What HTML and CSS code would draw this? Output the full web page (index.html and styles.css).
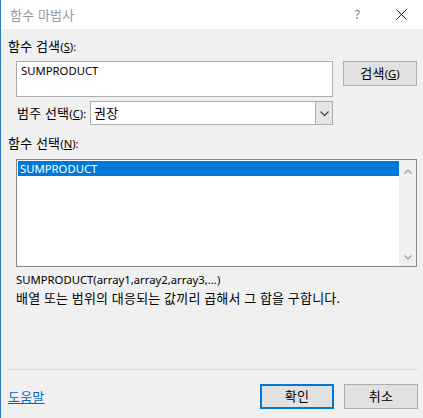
FILE: index.html
```html
<!DOCTYPE html>
<html lang="ko">
<head>
    <meta charset="UTF-8">
    <title>함수 마법사</title>
    <link rel="stylesheet" href="styles.css">
</head>
<body>
<div class="dialog">
    <div class="titlebar">
        <span class="title ko">함수 마법사</span>
        <span class="help">?</span>
        <svg class="close" width="11" height="11" viewBox="0 0 11 11">
            <path d="M0.5 0.5 L10.5 10.5 M10.5 0.5 L0.5 10.5" stroke="#222" stroke-width="1" fill="none"/>
        </svg>
    </div>

    <div class="content">
        <div class="label"><span class="ko">함수 검색</span>(<u>S</u>):</div>
        <div class="search-row">
            <div class="search-box">SUMPRODUCT</div>
            <button class="btn"><span class="ko">검색</span>(<u>G</u>)</button>
        </div>

        <div class="cat-row">
            <span class="cat-label"><span class="ko">범주 선택</span>(<u>C</u>):</span>
            <div class="select">
                <span class="select-value ko">권장</span>
                <span class="drop">
                    <svg width="9" height="5" viewBox="0 0 9 5">
                        <path d="M0.5 0.5 L4.5 4.5 L8.5 0.5" stroke="#444" stroke-width="1.2" fill="none"/>
                    </svg>
                </span>
            </div>
        </div>

        <div class="label label-list"><span class="ko">함수 선택</span>(<u>N</u>):</div>
        <div class="listbox">
            <div class="items">
                <div class="item selected">SUMPRODUCT</div>
            </div>
            <div class="scrollbar">
                <svg width="8" height="5" viewBox="0 0 8 5">
                    <path d="M0.5 4.5 L4 1 L7.5 4.5" stroke="#a6a6a6" stroke-width="1.5" fill="none"/>
                </svg>
                <svg width="8" height="5" viewBox="0 0 8 5">
                    <path d="M0.5 0.5 L4 4 L7.5 0.5" stroke="#a6a6a6" stroke-width="1.5" fill="none"/>
                </svg>
            </div>
        </div>

        <div class="desc">
            <div>SUMPRODUCT(array1,array2,array3,...)</div>
            <div class="ko">배열 또는 범위의 대응되는 값끼리 곱해서 그 합을 구합니다.</div>
        </div>

        <div class="separator"></div>

        <div class="footer">
            <a class="help-link ko" href="#">도움말</a>
            <button class="btn btn-default"><span class="ko">확인</span></button>
            <button class="btn"><span class="ko">취소</span></button>
        </div>
    </div>
</div>
</body>
</html>
```

FILE: styles.css
```css
body {
    margin: 0;
    font-family: "Noto Sans", "Noto Sans CJK KR", sans-serif;
    font-size: 11.3px;
    color: #000;
}
.ko {
    font-size: 13px;
    letter-spacing: 0.2px;
}
.dialog {
    width: 422px;
    height: 418px;
    border-left: 1px solid #2b78c4;
    background: #f0f0f0;
}
.titlebar {
    height: 29px;
    background: #fff;
    display: flex;
    align-items: center;
}
.title {
    margin-left: 9px;
    color: #999;
    flex: 1;
}
.help {
    color: #777;
    font-size: 12px;
    margin-right: 36px;
}
.close {
    margin-right: 16px;
}
.content {
    padding: 9px 5px 0 7px;
}
.label {
    height: 16px;
    line-height: 16px;
}
.label-list {
    margin-top: 10px;
}
.search-row {
    display: flex;
    align-items: flex-start;
    margin-top: 7px;
    padding-left: 8px;
}
.search-box {
    width: 311px;
    height: 34px;
    background: #fff;
    border: 1px solid #acacac;
    padding: 0 0 0 4px;
    line-height: 18px;
}
.btn {
    font-family: inherit;
    font-size: 11.3px;
    width: 74px;
    height: 25px;
    line-height: 16px;
    background: #e1e1e1;
    border: 1px solid #adadad;
    padding: 0;
    margin-left: 10px;
    color: #000;
}
.cat-row {
    display: flex;
    align-items: center;
    margin-top: 4px;
    padding-left: 9px;
}
.cat-label {
    width: 73px;
    line-height: 16px;
}
.select {
    width: 241px;
    height: 22px;
    display: flex;
    background: #fff;
    border: 1px solid #acacac;
}
.select-value {
    flex: 1;
    padding-left: 3px;
    line-height: 22px;
}
.drop {
    width: 16px;
    background: #e5e5e5;
    border-left: 1px solid #acacac;
    display: flex;
    align-items: center;
    justify-content: center;
}
.listbox {
    margin: 8px 0 0 8px;
    width: 399px;
    height: 106px;
    border: 1px solid #828790;
    background: #fff;
    display: flex;
}
.items {
    flex: 1;
    padding: 1px 0 0 1px;
}
.item {
    height: 15px;
    line-height: 15px;
    padding-left: 2px;
}
.selected {
    background: #0078d7;
    color: #fff;
}
.scrollbar {
    width: 17px;
    background: #f0f0f0;
    display: flex;
    flex-direction: column;
    justify-content: space-between;
    align-items: center;
    padding: 9px 0 6px;
}
.desc {
    margin: 3px 0 0 8px;
}
.desc div {
    height: 19px;
    line-height: 19px;
}
.separator {
    margin-top: 61px;
    height: 1px;
    background: #dcdcdc;
}
.footer {
    display: flex;
    align-items: center;
    margin-top: 14px;
}
.help-link {
    color: #0066cc;
    flex: 1;
}
.btn-default {
    border: 2px solid #0078d7;
}
```
